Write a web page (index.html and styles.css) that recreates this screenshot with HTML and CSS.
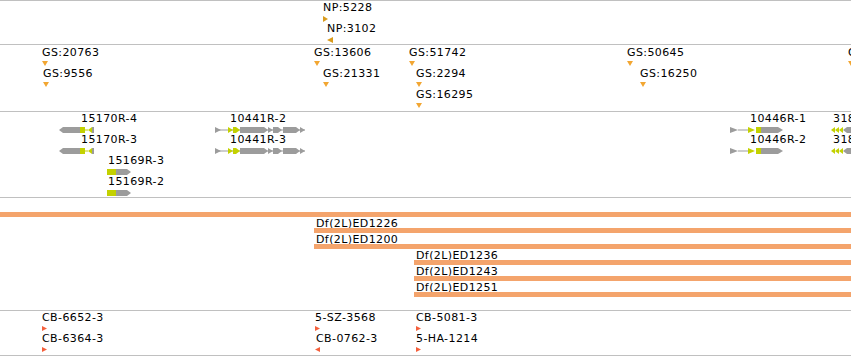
FILE: index.html
```html
<!DOCTYPE html>
<html lang="en">
<head>
    <meta charset="UTF-8">
    <title>Track view</title>
    <link rel="stylesheet" href="styles.css">
</head>
<body>

    <div class="browser">

        <!-- NP sites -->
        <div class="track track-np">
            <div class="lane">
                <div class="feat" style="left:323px">
                    <span class="label">NP:5228</span>
                    <svg class="mark" width="5" height="6"><polygon class="np" points="0,0 5,3 0,6"/></svg>
                </div>
            </div>
            <div class="lane">
                <div class="feat" style="left:327px">
                    <span class="label">NP:3102</span>
                    <svg class="mark" width="6" height="6"><polygon class="np" points="6,0 0,3 6,6"/></svg>
                </div>
            </div>
        </div>

        <!-- GS sites -->
        <div class="track track-gs">
            <div class="lane">
                <div class="feat" style="left:42px"><span class="label">GS:20763</span><svg class="mark" width="6" height="5"><polygon class="gs" points="0,0 6,0 3,5"/></svg></div>
                <div class="feat" style="left:314px"><span class="label">GS:13606</span><svg class="mark" width="6" height="5"><polygon class="gs" points="0,0 6,0 3,5"/></svg></div>
                <div class="feat" style="left:409px"><span class="label">GS:51742</span><svg class="mark" width="6" height="5"><polygon class="gs" points="0,0 6,0 3,5"/></svg></div>
                <div class="feat" style="left:627px"><span class="label">GS:50645</span><svg class="mark" width="6" height="5"><polygon class="gs" points="0,0 6,0 3,5"/></svg></div>
                <div class="feat" style="left:848px"><span class="label">GS:30117</span><svg class="mark" width="6" height="5"><polygon class="gs" points="0,0 6,0 3,5"/></svg></div>
            </div>
            <div class="lane">
                <div class="feat" style="left:43px"><span class="label">GS:9556</span><svg class="mark" width="6" height="5"><polygon class="gs" points="0,0 6,0 3,5"/></svg></div>
                <div class="feat" style="left:323px"><span class="label">GS:21331</span><svg class="mark" width="6" height="5"><polygon class="gs" points="0,0 6,0 3,5"/></svg></div>
                <div class="feat" style="left:416px"><span class="label">GS:2294</span><svg class="mark" width="6" height="5"><polygon class="gs" points="0,0 6,0 3,5"/></svg></div>
                <div class="feat" style="left:640px"><span class="label">GS:16250</span><svg class="mark" width="6" height="5"><polygon class="gs" points="0,0 6,0 3,5"/></svg></div>
            </div>
            <div class="lane">
                <div class="feat" style="left:416px"><span class="label">GS:16295</span><svg class="mark" width="6" height="5"><polygon class="gs" points="0,0 6,0 3,5"/></svg></div>
            </div>
        </div>

        <!-- transcripts -->
        <div class="track track-genes">
            <div class="lane">
                <div class="feat" style="left:59px">
                    <span class="label" style="margin-left:22px">15170R-4</span>
                    <svg class="glyph" width="36" height="6">
                        <polygon class="exon" points="0,3 4,0 21,0 21,6 4,6"/>
                        <rect class="cds" x="21" y="0" width="5" height="6"/>
                        <rect class="cds" x="26" y="2.5" width="3" height="1"/>
                        <polygon class="cds" points="29,3 33,0 33,6"/>
                        <rect class="exon" x="33" y="0" width="2" height="6"/>
                    </svg>
                </div>
                <div class="feat" style="left:215px">
                    <span class="label" style="margin-left:15px">10441R-2</span>
                    <svg class="glyph" width="92" height="6">
                        <rect class="exon" x="0" y="2.5" width="90" height="1"/>
                        <polygon class="exon" points="0,0 6,3 0,6"/>
                        <polygon class="cds" points="13,0 18,3 13,6"/>
                        <polygon class="cds" points="18,0 21,0 25,3 21,6 18,6"/>
                        <polygon class="exon" points="25,0 49,0 53,3 49,6 25,6"/>
                        <polygon class="exon" points="53,0 58,3 53,6"/>
                        <polygon class="exon" points="58,0 63,0 67,3 63,6 58,6"/>
                        <polygon class="exon" points="68,0 81,0 85,3 81,6 68,6"/>
                        <polygon class="exon" points="85,0 90,3 85,6"/>
                    </svg>
                </div>
                <div class="feat" style="left:730px">
                    <span class="label" style="margin-left:20px">10446R-1</span>
                    <svg class="glyph" width="54" height="6">
                        <rect class="exon" x="8" y="2.5" width="10" height="1"/>
                        <polygon class="exon" points="0,0 8,3 0,6"/>
                        <polygon class="cds" points="18,0 25,3 18,6"/>
                        <rect class="cds" x="26" y="0" width="5" height="6"/>
                        <polygon class="exon" points="31,0 48,0 53,3 48,6 31,6"/>
                    </svg>
                </div>
                <div class="feat" style="left:831px">
                    <span class="label" style="margin-left:2px">3186R-1</span>
                    <svg class="glyph" width="20" height="6">
                        <polygon class="cds" points="0,3 4,0 4,6"/>
                        <polygon class="cds" points="4,3 8,0 8,6"/>
                        <polygon class="cds" points="8,3 12,0 12,6"/>
                        <polygon class="exon" points="12,3 16,0 20,0 20,6 16,6"/>
                    </svg>
                </div>
            </div>
            <div class="lane">
                <div class="feat" style="left:59px">
                    <span class="label" style="margin-left:22px">15170R-3</span>
                    <svg class="glyph" width="36" height="6">
                        <polygon class="exon" points="0,3 4,0 21,0 21,6 4,6"/>
                        <rect class="cds" x="21" y="0" width="5" height="6"/>
                        <rect class="cds" x="26" y="2.5" width="3" height="1"/>
                        <polygon class="cds" points="29,3 33,0 33,6"/>
                        <rect class="exon" x="33" y="0" width="2" height="6"/>
                    </svg>
                </div>
                <div class="feat" style="left:215px">
                    <span class="label" style="margin-left:15px">10441R-3</span>
                    <svg class="glyph" width="92" height="6">
                        <rect class="exon" x="0" y="2.5" width="90" height="1"/>
                        <polygon class="exon" points="0,0 6,3 0,6"/>
                        <polygon class="cds" points="13,0 18,3 13,6"/>
                        <polygon class="cds" points="18,0 21,0 25,3 21,6 18,6"/>
                        <polygon class="exon" points="25,0 49,0 53,3 49,6 25,6"/>
                        <polygon class="exon" points="53,0 58,3 53,6"/>
                        <polygon class="exon" points="58,0 63,0 67,3 63,6 58,6"/>
                        <polygon class="exon" points="68,0 81,0 85,3 81,6 68,6"/>
                        <polygon class="exon" points="85,0 90,3 85,6"/>
                    </svg>
                </div>
                <div class="feat" style="left:730px">
                    <span class="label" style="margin-left:20px">10446R-2</span>
                    <svg class="glyph" width="54" height="6">
                        <rect class="exon" x="8" y="2.5" width="10" height="1"/>
                        <polygon class="exon" points="0,0 8,3 0,6"/>
                        <polygon class="cds" points="18,0 25,3 18,6"/>
                        <rect class="cds" x="26" y="0" width="5" height="6"/>
                        <polygon class="exon" points="31,0 48,0 53,3 48,6 31,6"/>
                    </svg>
                </div>
                <div class="feat" style="left:831px">
                    <span class="label" style="margin-left:2px">3186R-2</span>
                    <svg class="glyph" width="20" height="6">
                        <polygon class="cds" points="0,3 4,0 4,6"/>
                        <polygon class="cds" points="4,3 8,0 8,6"/>
                        <polygon class="cds" points="8,3 12,0 12,6"/>
                        <polygon class="exon" points="12,3 16,0 20,0 20,6 16,6"/>
                    </svg>
                </div>
            </div>
            <div class="lane">
                <div class="feat" style="left:107px">
                    <span class="label" style="margin-left:1px">15169R-3</span>
                    <svg class="glyph" width="25" height="6">
                        <rect class="cds" x="0" y="0" width="9" height="6"/>
                        <polygon class="exon" points="9,0 20,0 24,3 20,6 9,6"/>
                    </svg>
                </div>
            </div>
            <div class="lane">
                <div class="feat" style="left:107px">
                    <span class="label" style="margin-left:1px">15169R-2</span>
                    <svg class="glyph" width="25" height="6">
                        <rect class="cds" x="0" y="0" width="9" height="6"/>
                        <polygon class="exon" points="9,0 20,0 24,3 20,6 9,6"/>
                    </svg>
                </div>
            </div>
        </div>

        <!-- deletions -->
        <div class="track track-del">
            <div class="lane-del">
                <div class="del" style="left:-40px"><div class="del-bar"></div></div>
            </div>
            <div class="lane-del">
                <div class="del" style="left:314px"><span class="del-label">Df(2L)ED1226</span><div class="del-bar"></div></div>
            </div>
            <div class="lane-del">
                <div class="del" style="left:314px"><span class="del-label">Df(2L)ED1200</span><div class="del-bar"></div></div>
            </div>
            <div class="lane-del">
                <div class="del" style="left:414px"><span class="del-label">Df(2L)ED1236</span><div class="del-bar"></div></div>
            </div>
            <div class="lane-del">
                <div class="del" style="left:414px"><span class="del-label">Df(2L)ED1243</span><div class="del-bar"></div></div>
            </div>
            <div class="lane-del">
                <div class="del" style="left:414px"><span class="del-label">Df(2L)ED1251</span><div class="del-bar"></div></div>
            </div>
        </div>

        <!-- insertions -->
        <div class="track track-ins">
            <div class="lane">
                <div class="feat" style="left:42px"><span class="label">CB-6652-3</span><svg class="mark" width="5" height="5"><polygon class="ins" points="0,0 5,2.5 0,5"/></svg></div>
                <div class="feat" style="left:315px"><span class="label">5-SZ-3568</span><svg class="mark" width="5" height="5"><polygon class="ins" points="0,0 5,2.5 0,5"/></svg></div>
                <div class="feat" style="left:416px"><span class="label">CB-5081-3</span><svg class="mark" width="5" height="5"><polygon class="ins" points="0,0 5,2.5 0,5"/></svg></div>
            </div>
            <div class="lane">
                <div class="feat" style="left:42px"><span class="label">CB-6364-3</span><svg class="mark" width="5" height="5"><polygon class="ins" points="0,0 5,2.5 0,5"/></svg></div>
                <div class="feat" style="left:315px"><span class="label" style="margin-left:1px">CB-0762-3</span><svg class="mark" width="5" height="5"><polygon class="ins" points="0,2.5 5,0 5,5"/></svg></div>
                <div class="feat" style="left:416px"><span class="label">5-HA-1214</span><svg class="mark" width="5" height="5"><polygon class="ins" points="0,0 5,2.5 0,5"/></svg></div>
            </div>
        </div>

    </div>

</body>
</html>
```

FILE: styles.css
```css
* {
    margin: 0;
    padding: 0;
    box-sizing: border-box;
}
html, body {
    width: 851px;
    height: 356px;
    overflow: hidden;
    background: white;
}
body {
    font-family: "DejaVu Sans", sans-serif;
    font-size: 11px;
    color: black;
}
.browser {
    display: flex;
    flex-direction: column;
    width: 851px;
}
.track {
    position: relative;
    overflow: hidden;
    border-top: 1px solid #c0c0c0;
}
.track-np {
    height: 44px;
    padding-top: 1px;
}
.track-gs {
    height: 67px;
    padding-top: 2px;
}
.track-genes {
    height: 86px;
    padding-top: 1px;
}
.track-del {
    height: 113px;
    padding-top: 3px;
}
.track-ins {
    height: 46px;
    padding-top: 1px;
    border-bottom: 1px solid #c0c0c0;
}
.lane {
    position: relative;
    height: 21px;
}
.feat {
    position: absolute;
    top: 0;
    white-space: nowrap;
}
.label {
    display: block;
    height: 12px;
    line-height: 12px;
    letter-spacing: 0.4px;
}
.mark {
    display: block;
    margin-top: 2px;
}
.glyph {
    display: block;
    margin-top: 2px;
}
.np {
    fill: #d99b1c;
}
.gs {
    fill: #f2a632;
}
.ins {
    fill: #f5603c;
}
.exon {
    fill: #9c9c9c;
}
.cds {
    fill: #c3d100;
}
.lane-del {
    position: relative;
    height: 16px;
}
.del {
    position: absolute;
    top: 0;
    right: -20px;
    height: 16px;
}
.del-label {
    display: block;
    height: 11px;
    line-height: 14px;
    padding-left: 2px;
    letter-spacing: 0.4px;
    white-space: nowrap;
}
.del-bar {
    position: absolute;
    left: 0;
    right: 0;
    top: 11px;
    height: 5px;
    background: #f4a46c;
}
```
